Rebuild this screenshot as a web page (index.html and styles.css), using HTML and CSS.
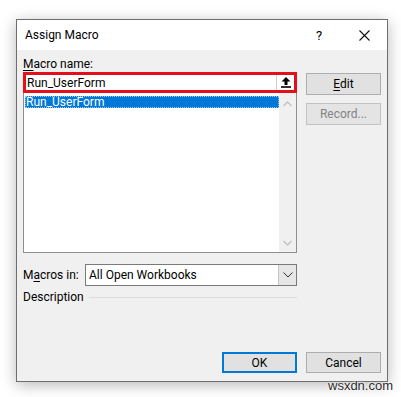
FILE: index.html
```html
<!DOCTYPE html>
<html lang="en">
<head>
    <meta charset="UTF-8">
    <title>Assign Macro</title>
    <link rel="stylesheet" href="styles.css">
</head>
<body>
    <div class="dialog">
        <div class="titlebar">
            <span class="title">Assign Macro</span>
            <span class="help">?</span>
            <span class="close">
                <svg width="11" height="11" viewBox="0 0 11 11"><path d="M0.5 0.5 L10.5 10.5 M10.5 0.5 L0.5 10.5" stroke="#111" stroke-width="1.1" fill="none"/></svg>
            </span>
        </div>

        <div class="content">
            <div class="main">
                <div class="left">
                    <div class="label"><u>M</u>acro name:</div>
                    <div class="name-input">
                        <span class="value">Run_UserForm</span>
                        <span class="pick">
                            <svg width="10" height="11" viewBox="0 0 10 11"><path d="M5 0 L9.5 4.5 L6.5 4.5 L6.5 8 L3.5 8 L3.5 4.5 L0.5 4.5 Z" fill="#000"/><rect x="0" y="9.2" width="10" height="1.6" fill="#000"/></svg>
                        </span>
                    </div>
                    <div class="list">
                        <div class="items">
                            <div class="item selected">Run_UserForm</div>
                        </div>
                        <div class="scrollbar">
                            <svg width="9" height="6" viewBox="0 0 9 6"><path d="M0.5 5 L4.5 1 L8.5 5" stroke="#c2c2c2" stroke-width="1.3" fill="none"/></svg>
                            <svg width="9" height="6" viewBox="0 0 9 6"><path d="M0.5 1 L4.5 5 L8.5 1" stroke="#c2c2c2" stroke-width="1.3" fill="none"/></svg>
                        </div>
                    </div>
                </div>
                <div class="side">
                    <button class="btn"><u>E</u>dit</button>
                    <button class="btn" disabled>Record...</button>
                </div>
            </div>

            <div class="macros-in">
                <span class="label">M<u>a</u>cros in:</span>
                <div class="select">
                    <span class="value">All Open Workbooks</span>
                    <span class="drop">
                        <svg width="10" height="6" viewBox="0 0 10 6"><path d="M0.5 0.5 L5 5 L9.5 0.5" stroke="#333" stroke-width="1" fill="none"/></svg>
                    </span>
                </div>
            </div>

            <div class="description">
                <span class="label">Description</span>
                <span class="rule"></span>
            </div>

            <div class="footer">
                <button class="btn default">OK</button>
                <button class="btn">Cancel</button>
            </div>
        </div>
    </div>

    <div class="watermark">wsxdn.com</div>
</body>
</html>
```

FILE: styles.css
```css
body {
    margin: 0;
    background: #fff;
    font-family: Roboto, "Noto Sans", sans-serif;
    font-size: 12px;
    color: #000;
    width: 401px;
    height: 397px;
    overflow: hidden;
    position: relative;
}
u {
    text-decoration: underline;
    text-underline-offset: 2px;
}
.dialog {
    box-sizing: border-box;
    width: 372px;
    height: 363px;
    margin: 19px 0 0 16px;
    border: 1px solid #6e6e6e;
    background: #f0f0f0;
    box-shadow: 0 3px 14px rgba(0,0,0,0.28);
    display: flex;
    flex-direction: column;
}
.titlebar {
    height: 30px;
    background: #fff;
    display: flex;
    align-items: center;
    padding-left: 8px;
}
.title {
    flex: 1;
    font-size: 12px;
}
.help {
    width: 8px;
    font-size: 13px;
    margin-right: 35px;
}
.close {
    display: flex;
    margin-right: 17px;
}
.content {
    flex: 1;
    display: flex;
    flex-direction: column;
    padding: 6px 6px 8px 6px;
}
.main {
    display: flex;
    gap: 9px;
}
.left {
    width: 274px;
}
.label {
    line-height: 16px;
    height: 16px;
    white-space: nowrap;
}
.name-input {
    box-sizing: border-box;
    height: 21px;
    border: 3px solid #e3101c;
    background: #fff;
    display: flex;
    align-items: center;
    position: relative;
    z-index: 1;
}
.name-input .value {
    flex: 1;
    padding-left: 1px;
}
.pick {
    box-sizing: border-box;
    width: 18px;
    height: 15px;
    border-left: 1px solid #cfcfcf;
    display: flex;
    align-items: center;
    justify-content: center;
}
.list {
    box-sizing: border-box;
    height: 161px;
    margin-top: -1px;
    border: 1px solid #8e8e8e;
    background: #fff;
    display: flex;
}
.items {
    flex: 1;
    padding: 3px 0 0 1px;
}
.item {
    height: 12px;
    line-height: 12px;
    padding-left: 1px;
}
.item.selected {
    background: #0078d7;
    color: #fff;
    outline: 1px dotted #9ec9ef;
    outline-offset: -1px;
}
.scrollbar {
    width: 17px;
    background: #f0f0f0;
    display: flex;
    flex-direction: column;
    justify-content: space-between;
    align-items: center;
    padding: 8px 0 6px;
}
.side {
    width: 75px;
    padding-top: 17px;
    display: flex;
    flex-direction: column;
    gap: 8px;
}
.btn {
    box-sizing: border-box;
    width: 75px;
    height: 22px;
    background: #e1e1e1;
    border: 1px solid #adadad;
    font-family: inherit;
    font-size: 12px;
    color: #000;
    padding: 0;
}
.btn:disabled {
    color: #838383;
    border-color: #c2c2c2;
    background: #e4e4e4;
}
.btn.default {
    border: 2px solid #0078d7;
}
.macros-in {
    margin-top: 11px;
    display: flex;
    align-items: center;
}
.macros-in .label {
    width: 62px;
}
.select {
    box-sizing: border-box;
    width: 212px;
    height: 22px;
    border: 1px solid #7a7a7a;
    background: #fff;
    display: flex;
    align-items: center;
}
.select .value {
    flex: 1;
    padding-left: 3px;
}
.drop {
    width: 17px;
    height: 20px;
    background: #e6e6e6;
    border-left: 1px solid #c4c4c4;
    display: flex;
    align-items: center;
    justify-content: center;
}
.description {
    margin-top: 3px;
    display: flex;
    align-items: center;
    gap: 5px;
    width: 274px;
}
.rule {
    flex: 1;
    height: 1px;
    background: #dcdcdc;
}
.footer {
    margin-top: auto;
    display: flex;
    justify-content: flex-end;
    gap: 9px;
}
.footer .btn {
    height: 21px;
}
.watermark {
    position: absolute;
    left: 328px;
    top: 378px;
    font-family: "Liberation Sans", Arial, sans-serif;
    font-size: 13px;
    color: #2a2a2a;
    text-shadow: 0 0 2px #fff, 0 0 2px #fff;
}
```
